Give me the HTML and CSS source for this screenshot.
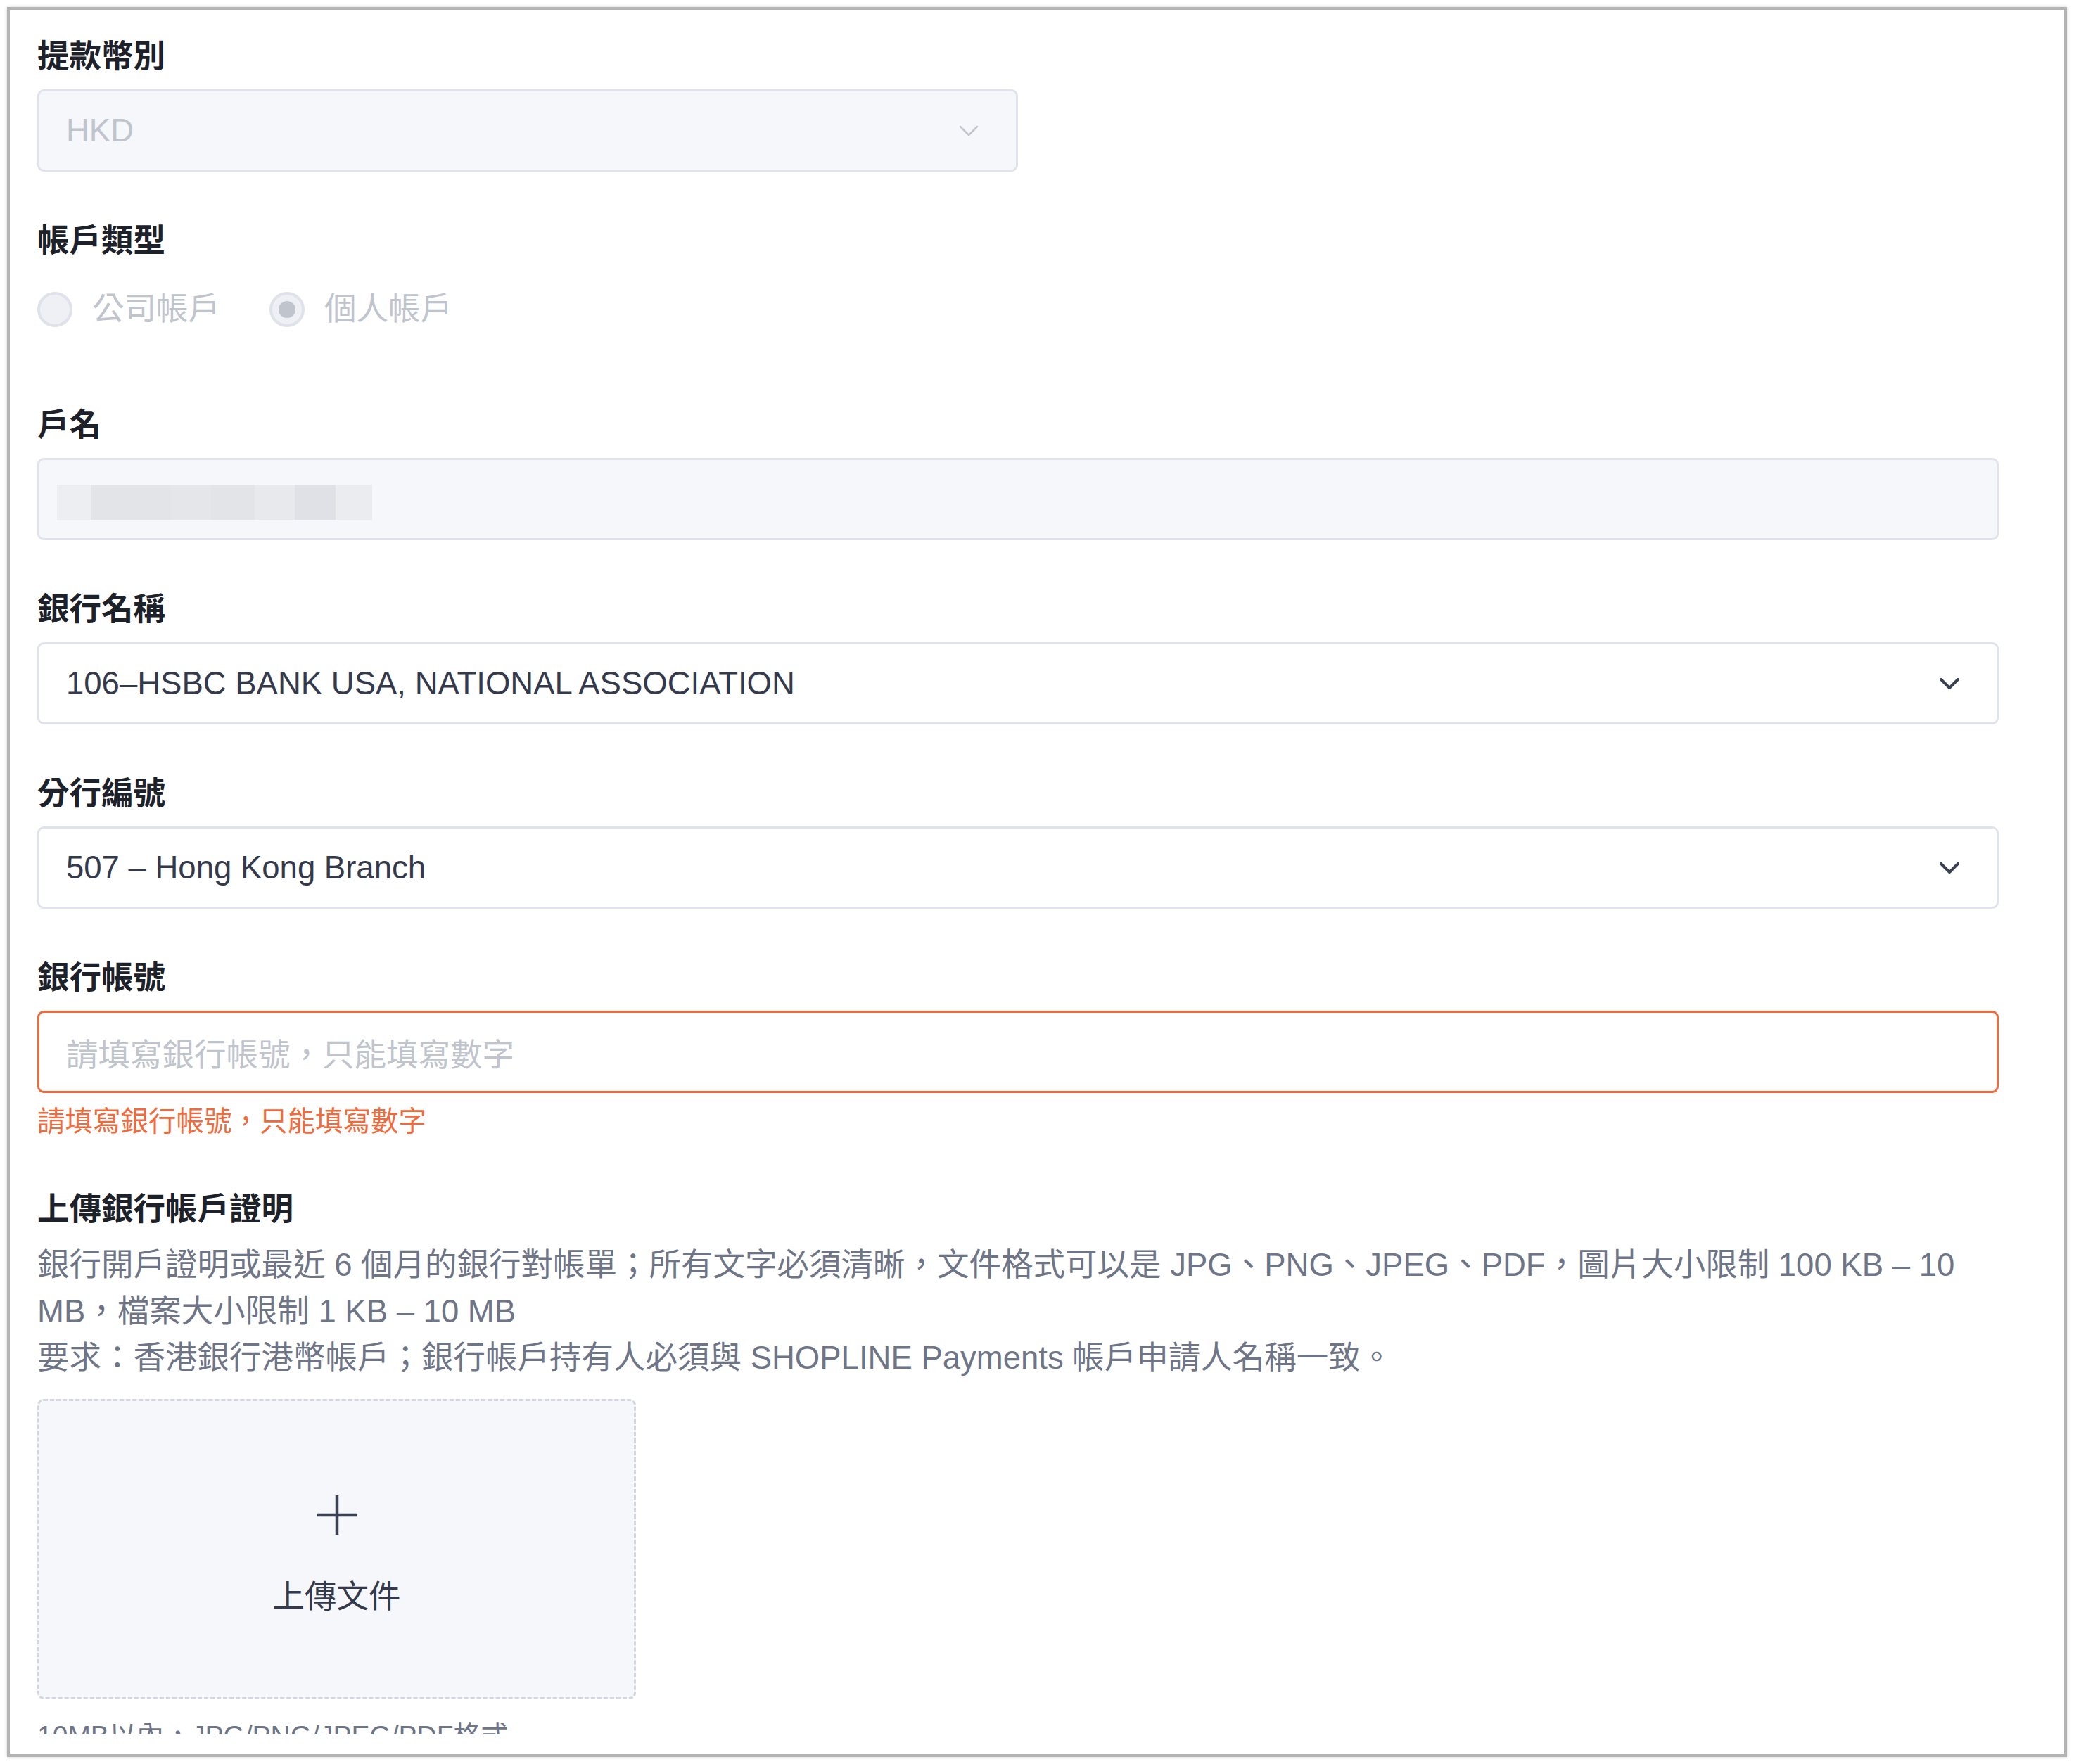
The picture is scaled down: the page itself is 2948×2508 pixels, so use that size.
FILE: index.html
```html
<!DOCTYPE html>
<html lang="zh-Hant">
<head>
    <meta charset="utf-8">
    <title>提款帳戶設定</title>
    <link rel="stylesheet" href="styles.css">
</head>
<body>
<div class="frame">
    <div class="viewport">
        <form class="form">
            <div class="field">
                <label class="field-label">提款幣別</label>
                <div class="control select is-disabled half">
                    <span class="value">HKD</span>
                    <svg class="chevron light" width="28" height="16" viewBox="0 0 28 16">
                        <polyline points="2,2 14,14 26,2"/>
                    </svg>
                </div>
            </div>

            <div class="field">
                <label class="field-label">帳戶類型</label>
                <div class="radio-group">
                    <span class="radio">
                        <span class="radio-dot"></span>
                        <span class="radio-text">公司帳戶</span>
                    </span>
                    <span class="radio is-checked">
                        <span class="radio-dot"></span>
                        <span class="radio-text">個人帳戶</span>
                    </span>
                </div>
            </div>

            <div class="field">
                <label class="field-label">戶名</label>
                <div class="control is-disabled">
                    <!-- blurred account holder name -->
                    <div class="blur">
                        <i class="b1"></i><i class="b2"></i><i class="b3"></i><i class="b4"></i><i class="b5"></i><i class="b6"></i><i class="b7"></i>
                    </div>
                </div>
            </div>

            <div class="field">
                <label class="field-label">銀行名稱</label>
                <div class="control select">
                    <span class="value">106–HSBC BANK USA, NATIONAL ASSOCIATION</span>
                    <svg class="chevron" width="28" height="16" viewBox="0 0 28 16">
                        <polyline points="2,2 14,14 26,2"/>
                    </svg>
                </div>
            </div>

            <div class="field">
                <label class="field-label">分行編號</label>
                <div class="control select">
                    <span class="value">507 – Hong Kong Branch</span>
                    <svg class="chevron" width="28" height="16" viewBox="0 0 28 16">
                        <polyline points="2,2 14,14 26,2"/>
                    </svg>
                </div>
            </div>

            <div class="field">
                <label class="field-label">銀行帳號</label>
                <div class="control is-error">
                    <span class="placeholder">請填寫銀行帳號，只能填寫數字</span>
                </div>
                <div class="error-msg">請填寫銀行帳號，只能填寫數字</div>
            </div>

            <div class="field">
                <label class="field-label">上傳銀行帳戶證明</label>
                <p class="desc">銀行開戶證明或最近 6 個月的銀行對帳單；所有文字必須清晰，文件格式可以是 JPG、PNG、JPEG、PDF，圖片大小限制 100 KB – 10 MB，檔案大小限制 1 KB – 10 MB<br>要求：香港銀行港幣帳戶；銀行帳戶持有人必須與 SHOPLINE Payments 帳戶申請人名稱一致。</p>
                <div class="upload">
                    <svg class="plus" width="58" height="58" viewBox="0 0 58 58">
                        <line x1="29" y1="1" x2="29" y2="57"/>
                        <line x1="1" y1="29" x2="57" y2="29"/>
                    </svg>
                    <span class="upload-text">上傳文件</span>
                </div>
                <div class="tip">10MB以內，JPG/PNG/JPEG/PDF格式</div>
            </div>
        </form>
    </div>
</div>
</body>
</html>
```

FILE: styles.css
```css
body {
    margin: 0;
    background: #fff;
    font-family: "Liberation Sans", "Noto Sans CJK TC", sans-serif;
}

.frame {
    margin: 10px;
    height: 2480px;
    border: 4px solid #b4b4b4;
    background: #fff;
    box-shadow: 0 0 5px rgba(0, 0, 0, .18);
}

/* the form is scrolled: the last tip line is cut by the viewport */
.viewport {
    box-sizing: border-box;
    height: 2452px;
    overflow: hidden;
    padding: 37px 93px 0 39px;
}

.form {
    margin: 0;
}

.field {
    margin-bottom: 69px;
}

.field-label {
    display: block;
    font-size: 45.5px;
    line-height: 60px;
    font-weight: bold;
    color: #1d2129;
    margin-bottom: 16px;
}

.control {
    box-sizing: border-box;
    height: 117px;
    border: 3px solid #e0e3eb;
    border-radius: 9px;
    background: #fff;
    padding: 0 53px 0 38px;
    display: flex;
    align-items: center;
    justify-content: space-between;
    font-size: 45.5px;
    color: #343a4c;
}

.control.half {
    width: 50%;
}

.control.is-disabled {
    background: #f5f7fa;
    color: #c0c4cc;
}

.control.is-error {
    border-color: #ef6a3d;
}

.placeholder {
    color: #c0c4cc;
}

.chevron polyline {
    fill: none;
    stroke: #3b4153;
    stroke-width: 4;
    stroke-linecap: round;
    stroke-linejoin: round;
}

.chevron.light polyline {
    stroke: #c0c4cc;
    stroke-width: 2.5;
}

/* radios */
.radio-group {
    height: 117px;
    box-sizing: border-box;
    padding-top: 26px;
    display: flex;
    align-items: flex-start;
    gap: 70px;
}

.radio {
    display: flex;
    align-items: center;
    gap: 28px;
    height: 50px;
}

.radio-dot {
    box-sizing: border-box;
    width: 50px;
    height: 50px;
    border: 4px solid #dfe2ea;
    border-radius: 50%;
    background: #eef0f5;
    display: flex;
    align-items: center;
    justify-content: center;
}

.radio.is-checked .radio-dot::after {
    content: "";
    width: 24px;
    height: 24px;
    border-radius: 50%;
    background: #c0c4cc;
}

.radio-text {
    font-size: 45.5px;
    line-height: 50px;
    color: #c0c4cc;
}

/* blurred name */
.blur {
    display: flex;
    height: 51px;
    margin-left: -13px;
    margin-top: 10px;
}

.blur i {
    display: block;
    height: 100%;
}

.b1 { width: 48px; background: #eceef1; }
.b2 { width: 113px; background: #e2e4e8; }
.b3 { width: 58px; background: #e5e6ea; }
.b4 { width: 62px; background: #e3e4e8; }
.b5 { width: 57px; background: #e8e9ed; }
.b6 { width: 58px; background: #dfe1e6; }
.b7 { width: 52px; background: #ebecef; }

.error-msg {
    margin-top: 13px;
    font-size: 39.5px;
    line-height: 54px;
    color: #ef6a3d;
}

.desc {
    margin: 15px 0 25px;
    font-size: 45.5px;
    line-height: 66px;
    color: #6e7587;
}

.upload {
    box-sizing: border-box;
    width: 851px;
    height: 427px;
    border: 3px dashed #d3d6df;
    border-radius: 9px;
    background: #f6f7fb;
    display: flex;
    flex-direction: column;
    align-items: center;
    justify-content: center;
    padding-top: 20px;
    gap: 58px;
}

.plus line {
    stroke: #3b4153;
    stroke-width: 4.5;
}

.upload-text {
    font-size: 45.5px;
    line-height: 60px;
    color: #343a4c;
}

.tip {
    margin-top: 26px;
    font-size: 39px;
    line-height: 52px;
    color: #6e7587;
}
```
